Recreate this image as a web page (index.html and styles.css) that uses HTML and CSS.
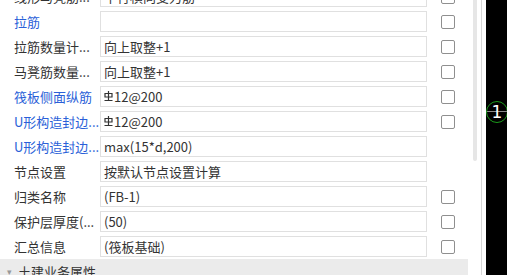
FILE: index.html
```html
<!DOCTYPE html>
<html lang="zh-CN">

<head>
  <meta charset="UTF-8" />
  <title>属性编辑</title>
  <link rel="stylesheet" href="styles.css">
</head>

<body>
  <!-- 属性列表 -->
  <div class="panel">
    <div class="list">
      <div class="row">
        <span class="label">线形马凳筋...</span>
        <span class="value">平行横向受力筋</span>
        <span class="check"></span>
      </div>
      <div class="row">
        <span class="label blue">拉筋</span>
        <span class="value"></span>
        <span class="check"></span>
      </div>
      <div class="row">
        <span class="label">拉筋数量计...</span>
        <span class="value">向上取整+1</span>
        <span class="check"></span>
      </div>
      <div class="row">
        <span class="label">马凳筋数量...</span>
        <span class="value">向上取整+1</span>
        <span class="check"></span>
      </div>
      <div class="row">
        <span class="label blue">筏板侧面纵筋</span>
        <span class="value"><svg class="grade" width="9" height="11" viewBox="0 0 9 11"><path d="M1 3.5h7v3.5h-7z M4.5 1v9 M0.5 10.5h8" fill="none" stroke="#333" stroke-width="1.2"/></svg>12@200</span>
        <span class="check"></span>
      </div>
      <div class="row">
        <span class="label blue">U形构造封边...</span>
        <span class="value"><svg class="grade" width="9" height="11" viewBox="0 0 9 11"><path d="M1 3.5h7v3.5h-7z M4.5 1v9 M0.5 10.5h8" fill="none" stroke="#333" stroke-width="1.2"/></svg>12@200</span>
        <span class="check"></span>
      </div>
      <div class="row">
        <span class="label blue">U形构造封边...</span>
        <span class="value">max(15*d,200)</span>
      </div>
      <div class="row">
        <span class="label">节点设置</span>
        <span class="value">按默认节点设置计算</span>
      </div>
      <div class="row">
        <span class="label">归类名称</span>
        <span class="value">(FB-1)</span>
        <span class="check"></span>
      </div>
      <div class="row">
        <span class="label">保护层厚度(...</span>
        <span class="value">(50)</span>
        <span class="check"></span>
      </div>
      <div class="row">
        <span class="label">汇总信息</span>
        <span class="value">(筏板基础)</span>
        <span class="check"></span>
      </div>
      <div class="group">
        <span class="arrow">&#9662;</span>
        <span>土建业务属性</span>
      </div>
    </div>
    <div class="scrollbar"></div>
  </div>

  <!-- 绘图区 -->
  <div class="canvas">
    <div class="axis"></div>
    <div class="mark">1</div>
  </div>
</body>

</html>
```

FILE: styles.css
```css
* {
  box-sizing: border-box;
  margin: 0;
  padding: 0;
}

body {
  display: flex;
  width: 507px;
  height: 275px;
  overflow: hidden;
  background-color: #fff;
  font-family: "Noto Sans CJK SC", "Noto Sans", sans-serif;
  font-size: 13px;
  color: #333;
}

/* Panel */
.panel {
  position: relative;
  width: 482px;
  height: 275px;
  border-right: 1px solid #d6d6d6;
  overflow: hidden;
}

.list {
  margin-top: -16px;
}

.row {
  display: flex;
  align-items: center;
  height: 25px;
}

.label {
  width: 100px;
  padding-left: 14px;
  white-space: nowrap;
  overflow: hidden;
}

.label.blue {
  color: #2a5fd8;
}

.value {
  display: flex;
  align-items: center;
  width: 327px;
  height: 21px;
  padding-left: 3px;
  border: 1px solid #e0e0e0;
  white-space: nowrap;
}

.grade {
  margin-right: 1px;
  margin-top: -2px;
}

.check {
  width: 14px;
  height: 14px;
  margin-left: 14px;
  border: 1px solid #8f8f8f;
  border-radius: 2px;
}

.group {
  display: flex;
  align-items: center;
  width: 468px;
  height: 25px;
  background-color: #ebebeb;
  padding-left: 7px;
}

.group .arrow {
  font-size: 9px;
  color: #999;
  margin-right: 6px;
}

.scrollbar {
  position: absolute;
  left: 473px;
  top: 0;
  width: 4px;
  height: 161px;
  border-radius: 0 0 2px 2px;
  background-color: #e6e6e6;
}

/* Canvas */
.canvas {
  position: relative;
  margin-left: 4px;
  flex: 1;
  background-color: #000;
}

.axis {
  position: absolute;
  left: 0;
  right: 0;
  top: 111px;
  height: 1px;
  background-color: #8a8a8a;
}

.mark {
  position: absolute;
  left: 0;
  top: 101px;
  width: 22px;
  height: 22px;
  border: 1px solid #1c9a1c;
  border-radius: 50%;
  color: #fff;
  font-family: "DejaVu Sans", sans-serif;
  font-size: 17px;
  line-height: 20px;
  text-align: center;
}
```
